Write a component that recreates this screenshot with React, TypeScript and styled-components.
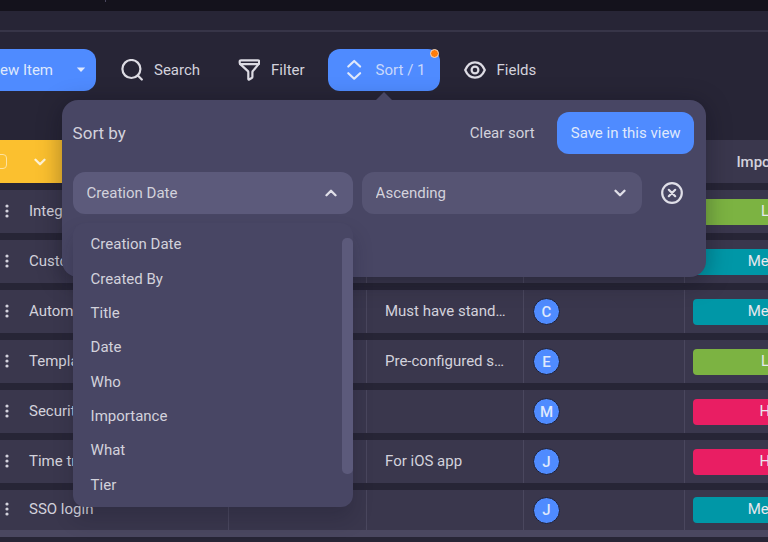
import React from "react";
import styled, { createGlobalStyle } from "styled-components";

const c = {
  page: "#272536",
  strip: "#14121c",
  line: "#373548",
  row: "#3a374d",
  cellLine: "#4a475e",
  panel: "#484664",
  field: "#565473",
  fieldOpen: "#5c5a7b",
  blue: "#4f8bff",
  text: "#d3d2dc",
  yellow: "#fbc02f",
};

const GlobalStyle = createGlobalStyle`
  * { box-sizing: border-box; }
  html, body { margin: 0; background: ${c.page}; overflow: hidden; }
  body, button, select, input { font-family: Roboto, sans-serif; font-size: 15px; color: ${c.text}; }
  button { cursor: pointer; border: 0; background: none; padding: 0; }
`;

const Page = styled.div`
  min-height: 100vh;
  overflow: hidden;
  background: ${c.page};
`;

const TopStrip = styled.div`
  display: flex;
  height: 11px;
  padding-left: 105px;
  background: ${c.strip};
`;

const StripTick = styled.span`
  width: 1px;
  height: 2px;
  background: #4a475e;
`;

const SubHeader = styled.div`
  height: 21px;
  border-bottom: 2px solid ${c.line};
`;

const Toolbar = styled.div`
  display: flex;
  align-items: center;
  gap: 9px;
  padding: 17px 0 49px;
`;

const NewItemButton = styled.button`
  display: flex;
  align-items: center;
  justify-content: flex-end;
  flex: none;
  gap: 23px;
  width: 136px;
  height: 42px;
  margin-left: -40px;
  margin-right: 1px;
  padding-right: 10px;
  border-radius: 12px;
  background: ${c.blue};
  color: #dfe8fc;
`;

const ToolButton = styled.button<{ $active?: boolean }>`
  display: flex;
  align-items: center;
  gap: 11px;
  height: 42px;
  padding: 0 14px 0 15px;
  border-radius: 12px;
  white-space: nowrap;
  background: ${(p) => (p.$active ? c.blue : "transparent")};
  color: ${(p) => (p.$active ? "#c9d8fb" : c.text)};

  > svg {
    color: ${(p) => (p.$active ? "#e0e8fa" : "#dddce4")};
  }
`;

const SortAnchor = styled.div`
  position: relative;
`;

const ActiveDot = styled.span`
  position: absolute;
  top: 0;
  right: 1px;
  width: 9px;
  height: 9px;
  border: 1px solid #f3dcc8;
  border-radius: 50%;
  background: #ff7d0c;
`;

const Popover = styled.section`
  position: absolute;
  z-index: 2;
  top: 51px;
  left: -266px;
  width: 644px;
  min-height: 177px;
  padding: 12px 12px 12px 11px;
  border-radius: 16px;
  background: ${c.panel};
  box-shadow: 0 4px 24px rgba(10, 8, 20, 0.35);

  &::before {
    content: "";
    position: absolute;
    top: -8px;
    left: 313px;
    border: solid transparent;
    border-width: 0 9px 9px;
    border-bottom-color: ${c.panel};
  }
`;

const PopoverHeader = styled.header`
  display: flex;
  align-items: center;
  gap: 22px;
  height: 42px;
  margin-bottom: 18px;
`;

const PopoverTitle = styled.h2`
  flex: 1;
  margin: 0;
  font-size: 17px;
  font-weight: 400;
`;

const SaveButton = styled.button`
  height: 42px;
  padding: 0 13px 0 14px;
  border-radius: 12px;
  background: ${c.blue};
  color: #dfe8fc;
`;

const SortRow = styled.div`
  display: grid;
  grid-template-columns: 1fr 1fr 43px;
  gap: 9px;
`;

const Field = styled.div`
  position: relative;
  color: #e0dfe8;

  > svg {
    position: absolute;
    top: 15px;
    right: 16px;
    pointer-events: none;
  }
`;

const Select = styled.select<{ $open?: boolean }>`
  appearance: none;
  display: block;
  width: 100%;
  height: 42px;
  padding: 0 36px 0 14px;
  border: 0;
  border-radius: 12px;
  outline: none;
  background: ${(p) => (p.$open ? c.fieldOpen : c.field)};
`;

const RemoveButton = styled.button`
  display: flex;
  align-items: center;
  justify-content: center;
  color: #e0dfe8;
`;

const OptionList = styled.ul`
  position: absolute;
  top: 51px;
  left: 0;
  right: 0;
  display: grid;
  grid-template-rows: repeat(8, 1fr);
  align-items: center;
  height: 284px;
  margin: 0;
  padding: 4px 18px 5px;
  border-radius: 12px;
  list-style: none;
  background: ${c.panel};
  box-shadow: 0 12px 20px rgba(20, 17, 35, 0.22);
`;

const Option = styled.li`
  line-height: 20px;
  color: ${c.text};
`;

const ScrollThumb = styled.span`
  position: absolute;
  top: 15px;
  right: 0;
  width: 11px;
  height: 236px;
  border-radius: 5px;
  background: ${c.fieldOpen};
`;

const Table = styled.table`
  table-layout: fixed;
  width: calc(100% + 121px);
  min-width: 889px;
  margin-left: -24px;
  border-collapse: separate;
  border-spacing: 0;
`;

const HeadCell = styled.th<{ $lead?: boolean }>`
  height: 43px;
  padding: 0;
  font-weight: 500;
  background: ${(p) => (p.$lead ? c.yellow : c.row)};
`;

const LeadTools = styled.div`
  display: flex;
  align-items: center;
  gap: 27px;
  padding-left: 16px;
  color: #fff3d6;
`;

const CheckBox = styled.input`
  appearance: none;
  width: 15px;
  height: 15px;
  margin: 0;
  border: 1px solid #fde2a0;
  border-radius: 4px;
`;

const Row = styled.tr<{ $last?: boolean }>`
  height: ${(p) => (p.$last ? 47 : 50)}px;
`;

const Cell = styled.td`
  padding: 0;
  border-top: 7px solid ${c.page};
  background: ${c.row};
  box-shadow: inset -1px 0 ${c.cellLine};
  white-space: nowrap;
  overflow: hidden;
`;

const TitleBox = styled.div`
  display: flex;
  align-items: center;
  gap: 17px;
  padding: 0 0 2px 26px;
`;

const MoreButton = styled.button`
  display: flex;
  justify-content: center;
  width: 10px;
`;

const Note = styled.div`
  padding: 0 18px 2px;
`;

const Avatar = styled.div`
  display: flex;
  align-items: center;
  justify-content: center;
  width: 27px;
  height: 27px;
  margin-left: 9px;
  border: 1px solid #201e30;
  border-radius: 50%;
  background: ${c.blue};
  color: #dfe8fc;
  font-weight: 500;
`;

const Pill = styled.div<{ $color: string }>`
  height: 26px;
  margin: 0 8px;
  border-radius: 4px;
  line-height: 25px;
  text-align: center;
  color: #e8e8ee;
  background: ${(p) => p.$color};
`;

const ScrollTrack = styled.div`
  height: 7px;
  background: #4a4760;
`;

const Chevron = ({ up }: { up?: boolean }) => (
  <svg width="12" height="12" viewBox="0 0 12 12" fill="none" stroke="currentColor" strokeWidth="2.3" strokeLinecap="round" strokeLinejoin="round" aria-hidden="true">
    <path d={up ? "M1.5 8.300 6 3.800l4.500 4.500" : "M1.500 3.700 6 8.200l4.500-4.500"} />
  </svg>
);

const Icon = ({ children }: { children: React.ReactNode }) => (
  <svg width="22" height="22" viewBox="0 0 22 22" fill="none" stroke="currentColor" strokeWidth="2.2" strokeLinecap="round" strokeLinejoin="round" aria-hidden="true">
    {children}
  </svg>
);

const options = ["Creation Date", "Created By", "Title", "Date", "Who", "Importance", "What", "Tier"];

const levels: Record<string, string> = { Low: "#7cb342", Medium: "#0097a7", High: "#e91e63" };

const rows = [
  { title: "Integrations", note: "", who: "", level: "Low" },
  { title: "Custom fields", note: "", who: "", level: "Medium" },
  { title: "Automation", note: "Must have stand…", who: "C", level: "Medium" },
  { title: "Templates", note: "Pre-configured s…", who: "E", level: "Low" },
  { title: "Security", note: "", who: "M", level: "High" },
  { title: "Time tracking", note: "For iOS app", who: "J", level: "High" },
  { title: "SSO login", note: "", who: "J", level: "Medium" },
];

const SortPopover = () => (
  <Popover aria-label="Sort">
    <PopoverHeader>
      <PopoverTitle>Sort by</PopoverTitle>
      <button type="button">Clear sort</button>
      <SaveButton type="button">Save in this view</SaveButton>
    </PopoverHeader>
    <SortRow>
      <Field>
        <Select $open aria-label="Sort field" defaultValue="Creation Date">
          {options.map((o) => (
            <option key={o}>{o}</option>
          ))}
        </Select>
        <Chevron up />
        <OptionList role="listbox" aria-label="Sort field options">
          {options.map((o) => (
            <Option key={o} role="option" aria-selected={o === "Creation Date"}>
              {o}
            </Option>
          ))}
          <ScrollThumb aria-hidden="true" />
        </OptionList>
      </Field>
      <Field>
        <Select aria-label="Sort direction" defaultValue="Ascending">
          <option>Ascending</option>
          <option>Descending</option>
        </Select>
        <Chevron />
      </Field>
      <RemoveButton type="button" aria-label="Remove sort">
        <Icon>
          <circle cx="11" cy="11" r="9.800" />
          <path d="m7.800 7.800 6.400 6.400M14.200 7.800l-6.400 6.400" />
        </Icon>
      </RemoveButton>
    </SortRow>
  </Popover>
);

export default function App() {
  return (
    <Page>
      <GlobalStyle />
      <TopStrip>
        <StripTick />
      </TopStrip>
      <SubHeader />
      <Toolbar>
        <NewItemButton type="button">
          New Item
          <svg width="10" height="6" viewBox="0 0 10 6" fill="currentColor" aria-hidden="true">
            <path d="M.8.5h8.400L5 5z" />
          </svg>
        </NewItemButton>
        <ToolButton type="button">
          <Icon>
            <circle cx="10.400" cy="10" r="9" />
            <path d="m16.800 16.400 4 4.100" />
          </Icon>
          Search
        </ToolButton>
        <ToolButton type="button">
          <Icon>
            <path d="M3 1.300h16.800c.8 0 1.300.5 1.300 1.200v1.300c0 .5-.2.900-.5 1.300l-5.800 7c-.3.300-.4.700-.4 1.100v4.700c0 .5-.3.900-.7 1.100l-2.500 1.500c-.5.300-.9 0-.9-.5v-6.800c0-.4-.1-.8-.4-1.100l-7.600-7c-.3-.4-.6-.8-.6-1.300V2.500c0-.7.5-1.200 1.300-1.200z" />
            <path d="M2 5.100h18.800" />
          </Icon>
          Filter
        </ToolButton>
        <SortAnchor>
          <ToolButton type="button" $active aria-expanded="true">
            <Icon>
              <path d="M5.300 7.500 11.200 2l5.900 5.500M5.300 14.200l5.900 5.500 5.900-5.500" />
            </Icon>
            Sort / 1
          </ToolButton>
          <ActiveDot />
          <SortPopover />
        </SortAnchor>
        <ToolButton type="button">
          <Icon>
            <path d="M1.200 11C3.200 6.200 6.700 3.300 11 3.300S18.800 6.200 20.800 11c-2 4.800-5.500 7.700-9.800 7.700S3.200 15.800 1.200 11z" />
            <circle cx="11" cy="11" r="3.400" />
          </Icon>
          Fields
        </ToolButton>
      </Toolbar>
      <Table>
        <colgroup>
          <col />
          <col width="138" />
          <col width="157" />
          <col width="161" />
          <col width="180" />
        </colgroup>
        <thead>
          <tr>
            <HeadCell $lead>
              <LeadTools>
                <CheckBox type="checkbox" aria-label="Select all" />
                <Chevron />
              </LeadTools>
            </HeadCell>
            <HeadCell />
            <HeadCell />
            <HeadCell />
            <HeadCell>Importance</HeadCell>
          </tr>
        </thead>
        <tbody>
          {rows.map((r, i) => (
            <Row key={r.title} $last={i === rows.length - 1}>
              <Cell>
                <TitleBox>
                  <MoreButton type="button" aria-label="More">
                    <svg width="4" height="14" viewBox="0 0 4 14" fill="currentColor" aria-hidden="true">
                      <circle cx="2" cy="2" r="1.600" />
                      <circle cx="2" cy="7" r="1.600" />
                      <circle cx="2" cy="12" r="1.600" />
                    </svg>
                  </MoreButton>
                  {r.title}
                </TitleBox>
              </Cell>
              <Cell />
              <Cell>
                <Note>{r.note}</Note>
              </Cell>
              <Cell>{r.who && <Avatar>{r.who}</Avatar>}</Cell>
              <Cell>
                <Pill $color={levels[r.level]}>{r.level}</Pill>
              </Cell>
            </Row>
          ))}
        </tbody>
      </Table>
      <ScrollTrack />
    </Page>
  );
}
